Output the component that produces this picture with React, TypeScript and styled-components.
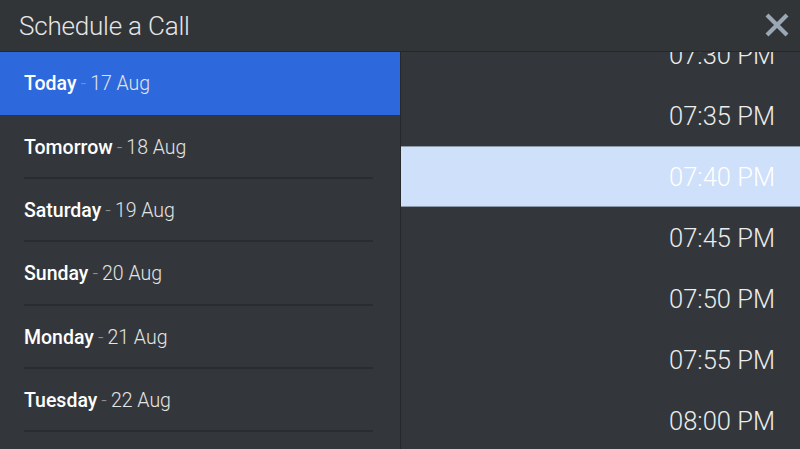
import React from 'react';
import styled, { createGlobalStyle } from 'styled-components';

const GlobalStyle = createGlobalStyle`
  html, body {
    margin: 0;
    padding: 0;
    background: #33373b;
    font-family: Roboto, 'Noto Sans', sans-serif;
    overflow: hidden;
  }
`;

const Screen = styled.div`
  width: 800px;
  height: 449px;
  display: flex;
  flex-direction: column;
  background: #33373b;
  color: #f2f2f2;
`;

const TopBar = styled.header`
  height: 51px;
  flex: none;
  display: flex;
  align-items: center;
  justify-content: space-between;
  padding: 0 10px 0 19px;
  background: #313538;
  border-bottom: 1px solid #25282b;
`;

const Title = styled.h1`
  margin: 0;
  font-size: 26px;
  font-weight: 300;
  color: #e6e6e6;
  letter-spacing: -0.2px;
`;

const CloseButton = styled.button`
  background: none;
  border: 0;
  padding: 0;
  width: 26px;
  height: 26px;
  display: flex;
  cursor: pointer;
  margin-top: -1px;
`;

const Body = styled.div`
  flex: 1;
  display: flex;
  min-height: 0;
`;

const DayList = styled.ul`
  width: 400px;
  flex: none;
  margin: 0;
  padding: 0;
  list-style: none;
  border-right: 1px solid #26292c;
  overflow: hidden;
`;

const DayRow = styled.li<{ $active?: boolean }>`
  height: 63.4px;
  box-sizing: border-box;
  display: flex;
  align-items: center;
  padding-left: 24px;
  background: ${(p) => (p.$active ? '#2d69dc' : 'transparent')};
  position: relative;
  font-size: 19.5px;

  &:after {
    content: '';
    position: absolute;
    left: 24px;
    right: 27px;
    bottom: 0;
    height: 2px;
    background: ${(p) => (p.$active ? 'transparent' : '#2a2d30')};
  }
`;

const DayName = styled.span`
  font-weight: 500;
  color: #ffffff;
`;

const Dash = styled.span`
  font-weight: 300;
  color: #8a9096;
  margin: 0 4px 0 4px;
`;

const DayDate = styled.span`
  font-weight: 300;
  color: #e4e4e4;
`;

const TimePane = styled.div`
  flex: 1;
  overflow: hidden;
`;

const TimeList = styled.ul`
  margin: -28px 0 0;
  padding: 0;
  list-style: none;
`;

const TimeRow = styled.li<{ $active?: boolean }>`
  height: 61px;
  box-sizing: border-box;
  display: flex;
  align-items: center;
  justify-content: flex-end;
  padding-right: 25px;
  font-size: 25.5px;
  font-weight: 300;
  color: #ececec;
  background: ${(p) => (p.$active ? '#cfe0fb' : 'transparent')};
  border-top: 1px solid ${(p) => (p.$active ? '#8d99a8' : 'transparent')};
  border-bottom: 1px solid ${(p) => (p.$active ? '#8d99a8' : 'transparent')};
  ${(p) => (p.$active ? 'color: #ffffff;' : '')}
`;

const days = [
  { name: 'Today', date: '17 Aug' },
  { name: 'Tomorrow', date: '18 Aug' },
  { name: 'Saturday', date: '19 Aug' },
  { name: 'Sunday', date: '20 Aug' },
  { name: 'Monday', date: '21 Aug' },
  { name: 'Tuesday', date: '22 Aug' },
];

const times = ['07:30 PM', '07:35 PM', '07:40 PM', '07:45 PM', '07:50 PM', '07:55 PM', '08:00 PM'];

const CloseIcon = () => (
  <svg width="26" height="26" viewBox="0 0 26 26">
    <path d="M3 3 L23 23 M23 3 L3 23" stroke="#9ba7b5" strokeWidth="4.2" strokeLinecap="butt" />
  </svg>
);

export default function App() {
  return (
    <>
      <GlobalStyle />
      <Screen>
        <TopBar>
          <Title>Schedule a Call</Title>
          <CloseButton aria-label="Close">
            <CloseIcon />
          </CloseButton>
        </TopBar>
        <Body>
          <DayList>
            {days.map((d, i) => (
              <DayRow key={d.name} $active={i === 0}>
                <DayName>{d.name}</DayName>
                <Dash>-</Dash>
                <DayDate>{d.date}</DayDate>
              </DayRow>
            ))}
          </DayList>
          <TimePane>
            <TimeList>
              {times.map((t) => (
                <TimeRow key={t} $active={t === '07:40 PM'}>
                  {t}
                </TimeRow>
              ))}
            </TimeList>
          </TimePane>
        </Body>
      </Screen>
    </>
  );
}
